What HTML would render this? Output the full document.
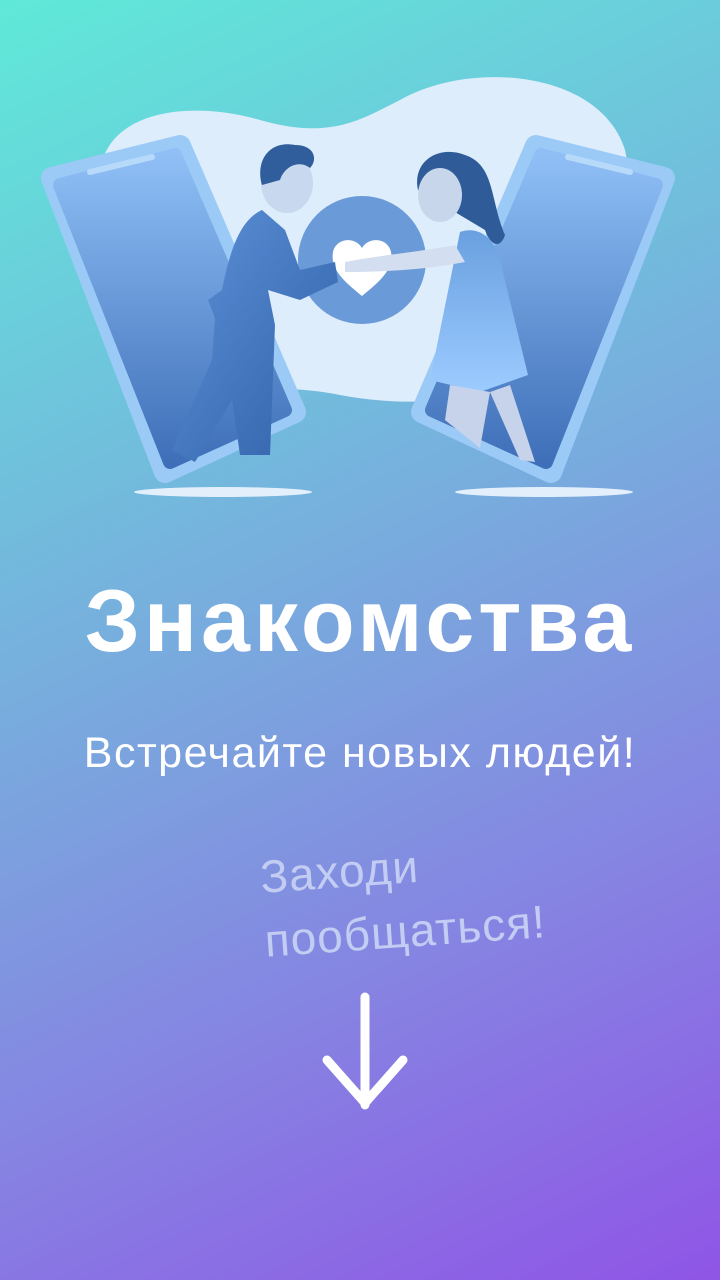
<!DOCTYPE html>
<html><head><meta charset="utf-8"><style>
html,body{margin:0;padding:0}
body{width:720px;height:1280px;overflow:hidden;position:relative;font-family:"Liberation Sans","DejaVu Sans",sans-serif;
background:linear-gradient(155deg,#5fe9d8 0%,#6fc3dc 28%,#7ba4de 50%,#8683e2 72%,#8f55e6 100%);}
.t{position:absolute;left:0;width:720px;text-align:center;color:#fff}
</style></head><body>
<svg width="720" height="520" style="position:absolute;left:0;top:0">
<defs>
<linearGradient id="ph" x1="0" y1="0" x2="0" y2="1"><stop offset="0" stop-color="#8fbff5"/><stop offset="1" stop-color="#3f6fb8"/></linearGradient>
<linearGradient id="suit" x1="0" y1="0" x2="1" y2="1"><stop offset="0" stop-color="#5d92d8"/><stop offset="1" stop-color="#2f5fa8"/></linearGradient>
<linearGradient id="dress" x1="0" y1="0" x2="0" y2="1"><stop offset="0" stop-color="#6aa0e0"/><stop offset="1" stop-color="#9ccbff"/></linearGradient>
</defs>
<path d="M100,170 C110,110 190,100 260,120 C330,140 360,120 400,100 C470,60 600,70 625,150 C640,220 610,300 560,360 C500,400 420,410 340,395 C270,380 200,400 150,360 C110,310 90,230 100,170Z" fill="#ddedfc"/>
<ellipse cx="223" cy="492" rx="89" ry="5" fill="#e3f0fc"/>
<ellipse cx="544" cy="492" rx="89" ry="5" fill="#e3f0fc"/>
<g stroke-linejoin="round">
<polygon points="52,178 180,146 295,412 165,472" fill="#9ccaf7" stroke="#9ccaf7" stroke-width="22"/>
<polygon points="60,185 175,155 285,410 170,462" fill="url(#ph)" stroke="url(#ph)" stroke-width="14"/>
<polygon points="536,146 664,178 551,472 422,412" fill="#9ccaf7" stroke="#9ccaf7" stroke-width="22"/>
<polygon points="541,155 656,185 546,462 432,410" fill="url(#ph)" stroke="url(#ph)" stroke-width="14"/>
</g>
<path d="M90,172 l62,-15" stroke="#b8dafa" stroke-width="6" stroke-linecap="round"/>
<path d="M568,157 l62,15" stroke="#b8dafa" stroke-width="6" stroke-linecap="round"/>
<circle cx="362" cy="260" r="64" fill="#6a9bd8"/>
<path d="M362,296 C345,282 330,270 333,252 C336,238 355,236 362,248 C369,236 388,238 391,252 C394,270 379,282 362,296Z" fill="#ffffff"/>
<path d="M262,210 C240,220 230,250 222,290 L208,300 L215,318 L212,360 L172,450 L195,462 L232,400 L240,455 L270,455 L275,325 L268,290 L300,300 L338,282 L335,262 L300,270 L285,230 Z" fill="url(#suit)"/>
<ellipse cx="287" cy="183" rx="26" ry="30" fill="#c7d8ef"/>
<path d="M262,185 C255,160 270,140 295,145 C315,145 318,160 310,168 C300,160 285,165 280,180 Z" fill="#305e9c"/>
<path d="M418,190 C412,160 440,145 465,155 C495,165 490,200 505,235 C500,250 490,245 485,230 Z" fill="#2f5c98"/>
<ellipse cx="440" cy="195" rx="22" ry="27" fill="#c8d6ec"/>
<path d="M460,232 C480,225 495,240 500,260 L528,375 L480,392 L430,380 Z" fill="url(#dress)"/>
<path d="M455,245 C420,252 380,255 345,262 L345,272 C380,272 425,270 465,262 Z" fill="#d3dff0"/>
<path d="M450,385 L445,420 L480,448 L490,392 Z M490,392 L520,460 L535,462 L510,385 Z" fill="#c6d3ea"/>
</svg>
<div class="t" style="top:570px;font-size:88px;font-weight:bold;letter-spacing:4px">Знакомства</div>
<div class="t" style="top:729px;font-size:43px;letter-spacing:1.5px">Встречайте новых людей!</div>
<div style="position:absolute;left:258px;top:845px;transform:rotate(-4deg);transform-origin:left top;color:#c3ccf2;font-size:46px;line-height:64px;letter-spacing:1px">Заходи<br>пообщаться!</div>
<svg width="120" height="130" style="position:absolute;left:305px;top:990px">
<path d="M60,7 V115 M22,70 L60,113 L98,70" fill="none" stroke="#fff" stroke-width="9" stroke-linecap="round" stroke-linejoin="round"/>
</svg>
</body></html>
